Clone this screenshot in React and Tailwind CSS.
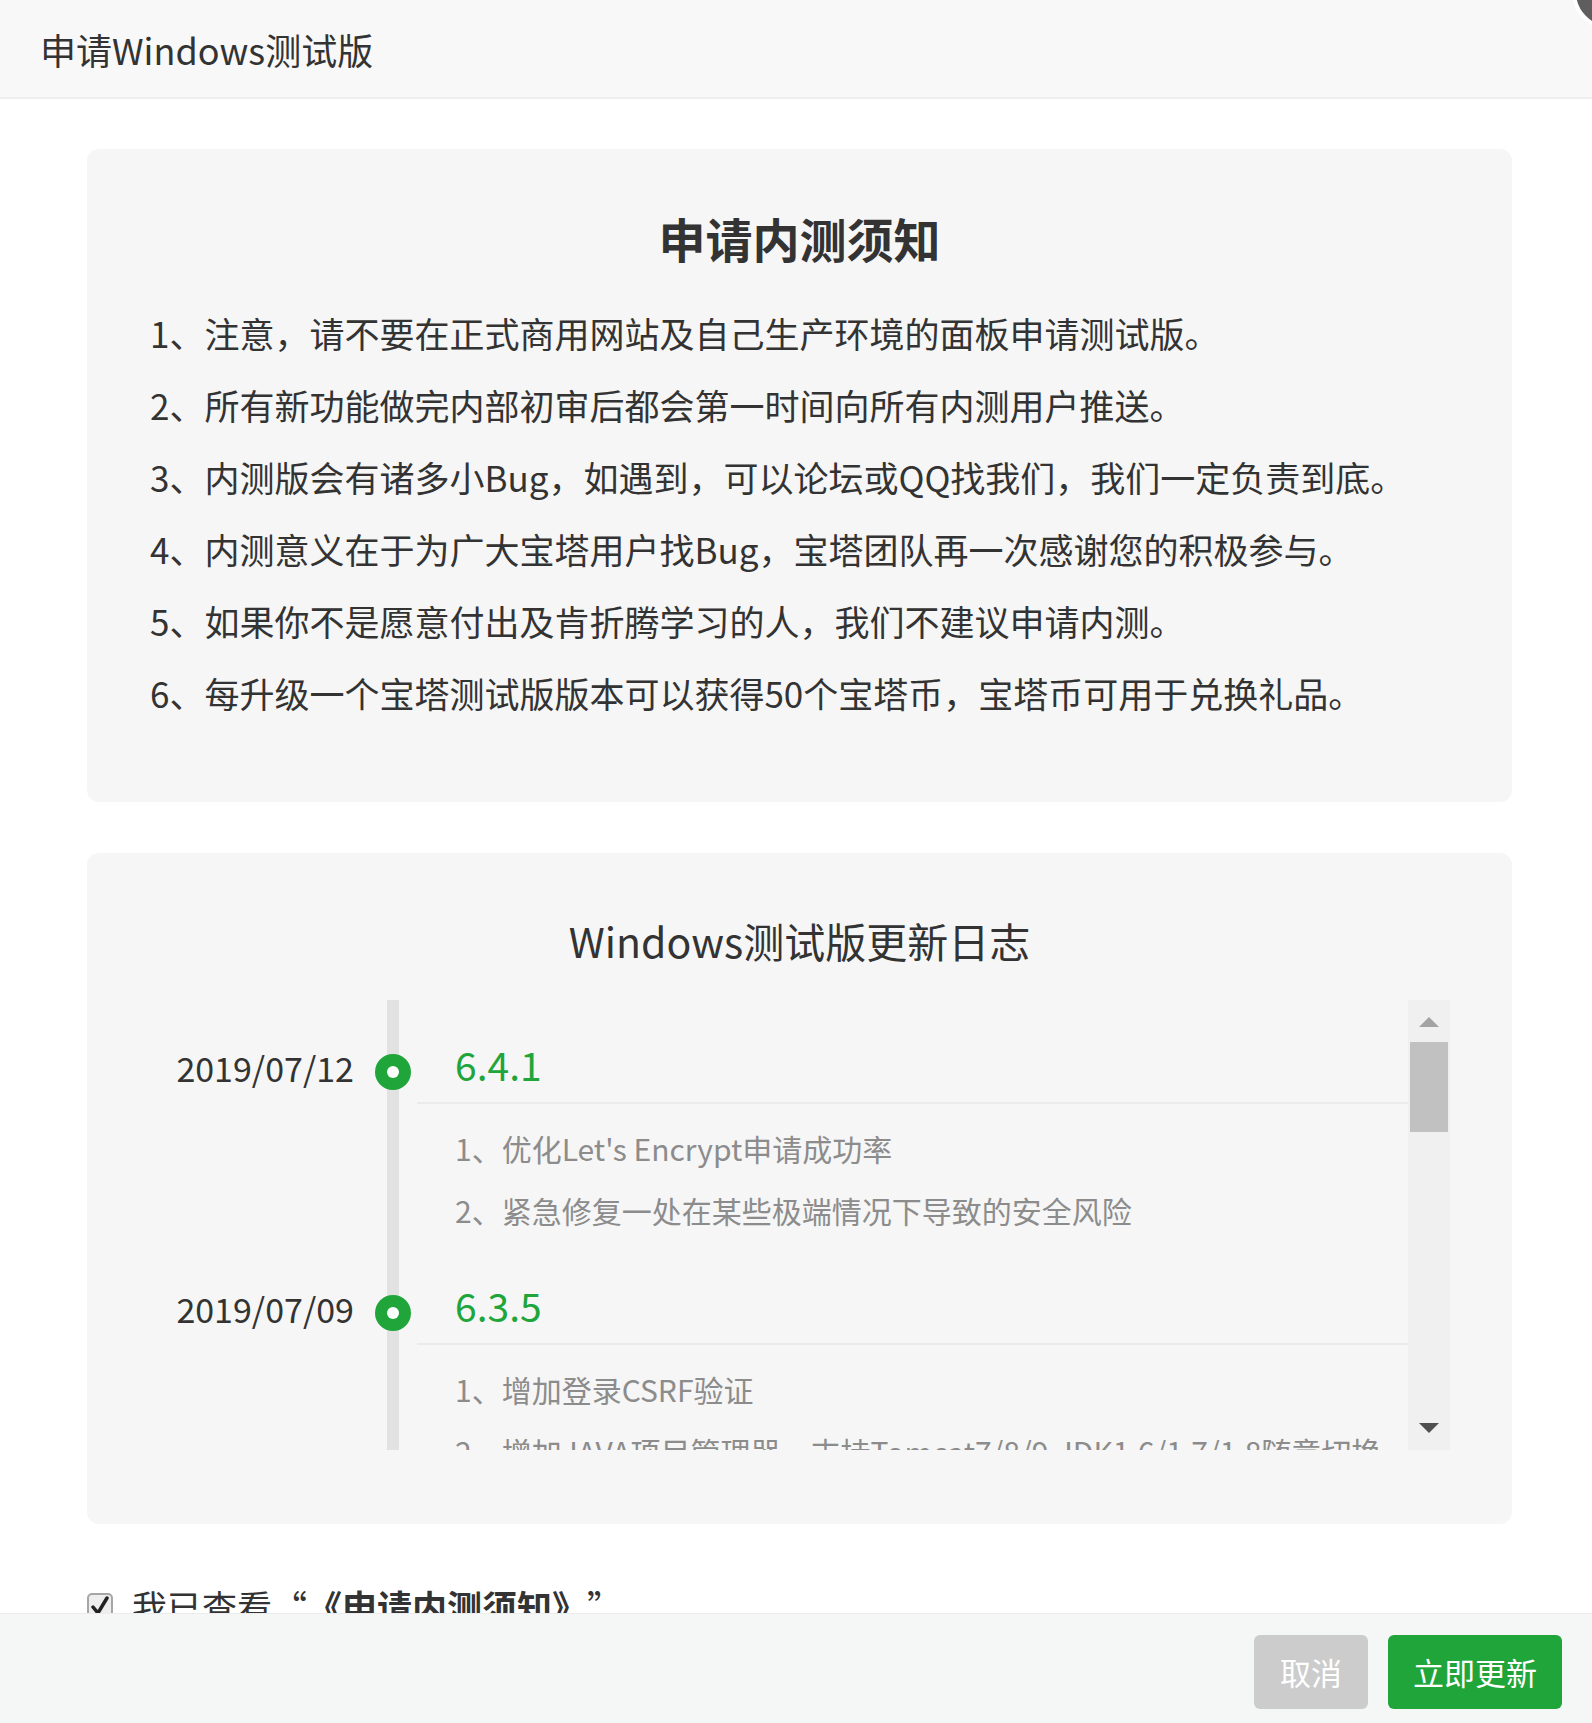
import React from "react";

const notices = [
  "1、注意，请不要在正式商用网站及自己生产环境的面板申请测试版。",
  "2、所有新功能做完内部初审后都会第一时间向所有内测用户推送。",
  "3、内测版会有诸多小Bug，如遇到，可以论坛或QQ找我们，我们一定负责到底。",
  "4、内测意义在于为广大宝塔用户找Bug，宝塔团队再一次感谢您的积极参与。",
  "5、如果你不是愿意付出及肯折腾学习的人，我们不建议申请内测。",
  "6、每升级一个宝塔测试版版本可以获得50个宝塔币，宝塔币可用于兑换礼品。",
];

const logs = [
  {
    date: "2019/07/12",
    ver: "6.4.1",
    items: ["1、优化Let's Encrypt申请成功率", "2、紧急修复一处在某些极端情况下导致的安全风险"],
  },
  {
    date: "2019/07/09",
    ver: "6.3.5",
    items: ["1、增加登录CSRF验证", "2、增加JAVA项目管理器，支持Tomcat7/8/9,JDK1.6/1.7/1.8随意切换", "3、修复若干已知问题"],
  },
];

function Entry({ date, ver, items }) {
  return (
    <div className="flex">
      <div className="w-[238px] shrink-0 pr-[33px] pt-[32px]">
        <div className="h-[70px] flex items-center justify-end text-[34px] text-[#333333]">{date}</div>
      </div>
      <div className="w-[12px] shrink-0 bg-[#e2e2e2] relative">
        <div className="absolute left-[-12px] top-[54px] w-[36px] h-[36px] rounded-full bg-[#20a53a] flex items-center justify-center">
          <div className="w-[12px] h-[12px] rounded-full bg-white" />
        </div>
      </div>
      <div className="flex-1 min-w-0 pl-[18px] pt-[32px]">
        <div className="h-[72px] flex items-center pl-[38px] pb-[5px] text-[39px] text-[#20a53a] border-b-2 border-[#ebebeb]">{ver}</div>
        <div className="pt-[13px] pl-[38px] text-[30px] leading-[62px] text-[#8c8c8c]">
          {items.map((t) => (
            <div key={t} className="whitespace-nowrap">{t}</div>
          ))}
        </div>
      </div>
    </div>
  );
}

export default function App() {
  return (
    <div className="relative flex flex-col w-full h-[1723px] overflow-hidden bg-white text-[#333333] font-['Noto_Sans_CJK_SC',sans-serif]">
      <div className="h-[99px] shrink-0 bg-[#f8f8f8] border-b-2 border-[#eeeeee] flex items-center pl-[40px] text-[36px]">
        申请Windows测试版
      </div>

      <div className="flex-1 min-h-0 overflow-hidden pl-[87px] pr-[80px] pt-[50px]">
        <div className="rounded-[12px] bg-[#f6f6f6] pt-[64px] pb-[73px] pl-[63px] pr-[40px]">
          <div className="text-center text-[47px] font-bold leading-[50px] pr-[23px]">申请内测须知</div>
          <div className="mt-[34px] text-[35px] leading-[72px]">
            {notices.map((n) => (
              <div key={n} className="whitespace-nowrap">{n}</div>
            ))}
          </div>
        </div>

        <div className="mt-[51px] rounded-[12px] bg-[#f6f6f6] pt-[66px] pb-[74px] px-[62px]">
          <div className="text-center text-[41px] leading-[42px]">Windows测试版更新日志</div>
          <div className="mt-[39px] h-[450px] flex overflow-hidden">
            <div className="flex-1 min-w-0 overflow-hidden">
              {logs.map((l) => (
                <Entry key={l.ver} {...l} />
              ))}
            </div>
            <div className="w-[42px] shrink-0 bg-[#f0f0f0] flex flex-col items-center">
              <svg width="20" height="10" viewBox="0 0 20 10" className="mt-[17px]">
                <polygon points="10,0 20,10 0,10" fill="#a3a3a3" />
              </svg>
              <div className="mt-[15px] w-[38px] h-[90px] bg-[#c1c1c1]" />
              <div className="flex-1" />
              <svg width="20" height="10" viewBox="0 0 20 10" className="mb-[17px]">
                <polygon points="0,0 20,0 10,10" fill="#505050" />
              </svg>
            </div>
          </div>
        </div>

        <div className="mt-[58px] flex items-center text-[35px] leading-[48px]">
          <div className="w-[26px] h-[27px] shrink-0 rounded-[5px] border-2 border-[#a6a6a6] bg-[#eeeeee] flex items-center justify-center">
            <svg width="18" height="20" viewBox="0 0 18 20">
              <path d="M2 11 L7 17 L16 2" fill="none" stroke="#222222" strokeWidth="3.5" strokeLinecap="round" strokeLinejoin="round" />
            </svg>
          </div>
          <span className="ml-[19px]">我已查看“</span>
          <span className="font-bold">《申请内测须知》</span>
          <span>”</span>
        </div>
      </div>

      <div className="h-[110px] shrink-0 bg-[#f5f6f6] border-t border-[#ececec] flex justify-end items-start pt-[21px] pr-[30px] gap-[20px]">
        <button className="w-[114px] h-[74px] rounded-[6px] bg-[#cccccc] text-white text-[31px]">取消</button>
        <button className="w-[174px] h-[74px] rounded-[6px] bg-[#20a53a] text-white text-[31px]">立即更新</button>
      </div>

      <div className="absolute right-[-56px] top-[-46px] w-[76px] h-[76px] rounded-full bg-[#5e5e5e] border-4 border-white" />
    </div>
  );
}
